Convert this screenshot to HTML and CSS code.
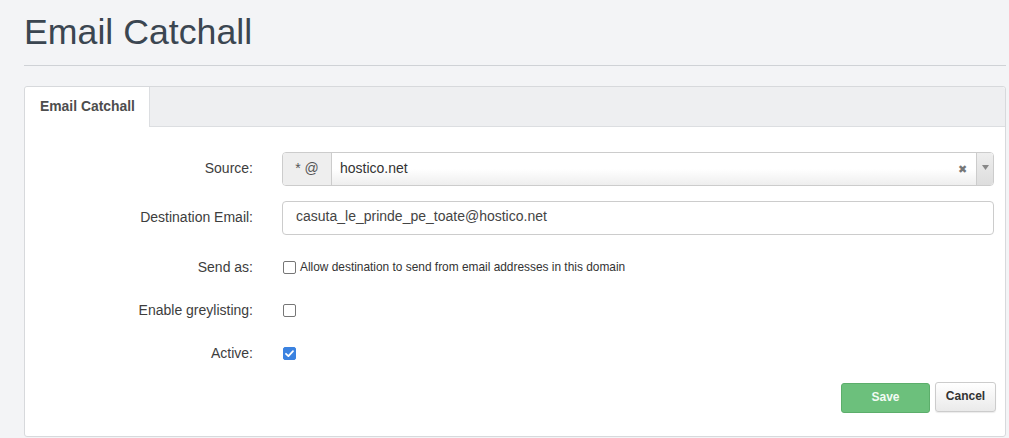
FILE: index.html
```html
<!DOCTYPE html>
<html>
<head>
<meta charset="utf-8">
<link rel="stylesheet" href="styles.css">
</head>
<body>
<div class="page">
  <h1 class="title">Email Catchall</h1>
  <div class="rule"></div>
  <div class="panel">
    <div class="tabs">
      <div class="tab active">Email Catchall</div>
    </div>
    <div class="form">
      <div class="row row-input">
        <div class="label">Source:</div>
        <div class="control">
          <div class="group">
            <span class="addon">* @</span>
            <div class="select">
              <span class="select-value">hostico.net</span>
              <span class="select-clear">&#x2716;</span>
              <span class="select-arrow"><svg width="7" height="5" viewBox="0 0 7 5"><path d="M0 0h7L3.5 5z" fill="#888"/></svg></span>
            </div>
          </div>
        </div>
      </div>
      <div class="row row-input">
        <div class="label">Destination Email:</div>
        <div class="control">
          <div class="input">casuta_le_prinde_pe_toate@hostico.net</div>
        </div>
      </div>
      <div class="row row-check first-check">
        <div class="label">Send as:</div>
        <div class="control check-line">
          <span class="box"></span>
          <span class="check-text">Allow destination to send from email addresses in this domain</span>
        </div>
      </div>
      <div class="row row-check">
        <div class="label">Enable greylisting:</div>
        <div class="control check-line">
          <span class="box"></span>
        </div>
      </div>
      <div class="row row-check">
        <div class="label">Active:</div>
        <div class="control check-line">
          <span class="box checked"><svg width="13" height="13" viewBox="0 0 13 13"><path d="M3 6.8l2.4 2.3L10 4.2" fill="none" stroke="#fff" stroke-width="1.8" stroke-linecap="round" stroke-linejoin="round"/></svg></span>
        </div>
      </div>
      <div class="actions">
        <button class="btn btn-save">Save</button>
        <button class="btn btn-cancel">Cancel</button>
      </div>
    </div>
  </div>
</div>
</body>
</html>
```
FILE: styles.css
```css
html, body {
  margin: 0;
  padding: 0;
  background: #f3f4f6;
  font-family: "Liberation Sans", Arial, sans-serif;
  color: #333;
}
.page {
  padding: 0 3px 0 24px;
}
.title {
  margin: 0;
  padding-top: 12px;
  height: 43px;
  font-size: 35.7px;
  font-weight: normal;
  line-height: 40px;
  color: #3b4651;
}
.rule {
  margin-top: 10px;
  height: 1px;
  background: #cfd2d6;
}
.panel {
  margin-top: 20px;
  background: #fff;
  border: 1px solid #d7d9dc;
  border-radius: 3px;
  box-sizing: border-box;
  height: 351px;
}
.tabs {
  display: flex;
  height: 39px;
  background: #eeeff1;
  border-bottom: 1px solid #dcdee1;
  border-radius: 3px 3px 0 0;
}
.tab {
  width: 125px;
  box-sizing: border-box;
  padding-left: 15px;
  line-height: 38px;
  font-size: 13.9px;
  font-weight: bold;
  color: #4d4d4d;
}
.tab.active {
  background: #fff;
  height: 40px;
  border-right: 1px solid #dcdee1;
  border-radius: 3px 0 0 0;
}
.form {
  padding: 25px 11px 0 0;
}
.row {
  display: flex;
  align-items: center;
}
.row-input {
  height: 34px;
  margin-bottom: 15px;
}
.row-input .label {
  padding-bottom: 3px;
}
.row-input + .row-input {
  margin-bottom: 18px;
}
.row-check {
  height: 28px;
  margin-bottom: 15px;
}
.row-check .label {
  padding-bottom: 1px;
}
.row-check:last-of-type {
  margin-bottom: 0;
}
.label {
  width: 228px;
  flex: none;
  text-align: right;
  font-size: 14px;
  color: #3d3d3d;
}
.control {
  flex: 1;
  margin-left: 29px;
}
.group {
  display: flex;
  height: 34px;
  border: 1px solid #ccc;
  border-radius: 4px;
  box-sizing: border-box;
  overflow: hidden;
}
.addon {
  width: 48px;
  flex: none;
  background: #eee;
  border-right: 1px solid #ccc;
  text-align: center;
  font-size: 14px;
  line-height: 30px;
  color: #555;
}
.select {
  flex: 1;
  display: flex;
  align-items: center;
  background: linear-gradient(#fff 0%, #fff 50%, #eee 100%);
}
.select-value {
  flex: 1;
  padding-left: 8px;
  padding-bottom: 2px;
  font-size: 14px;
  color: #333;
}
.select-clear {
  font-size: 11px;
  color: #777;
  margin-right: 9px;
}
.select-arrow {
  width: 17px;
  height: 32px;
  box-sizing: border-box;
  border-left: 1px solid #ccc;
  background: linear-gradient(#eee, #ddd);
  display: flex;
  justify-content: center;
  padding-top: 12px;
}
.select-arrow svg {
  display: block;
}
.input {
  height: 34px;
  box-sizing: border-box;
  border: 1px solid #ccc;
  border-radius: 4px;
  padding: 0 13px;
  line-height: 29px;
  font-size: 14px;
  color: #444;
}
.check-line {
  display: flex;
  align-items: center;
  margin-left: 30px;
}
.box {
  width: 13px;
  height: 13px;
  box-sizing: border-box;
  border: 1px solid #767676;
  border-radius: 2px;
  background: #fff;
  flex: none;
}
.box.checked {
  background: #3b82e0;
  border-color: #3b82e0;
  position: relative;
}
.box.checked svg {
  position: absolute;
  left: -1px;
  top: -1px;
}
.check-text {
  margin-left: 4px;
  font-size: 11.9px;
  color: #333;
}
.actions {
  display: flex;
  justify-content: flex-end;
  align-items: flex-start;
  margin-top: 11px;
  margin-right: -2px;
}
.btn {
  font-family: "Liberation Sans", Arial, sans-serif;
  font-size: 12px;
  font-weight: bold;
  border-radius: 3px;
  cursor: pointer;
}
.btn-save {
  width: 89px;
  height: 30px;
  margin-top: 1px;
  padding-bottom: 4px;
  background: #6cc07c;
  border: 1px solid #5cae6b;
  color: #f2fbf3;
}
.btn-cancel {
  width: 61px;
  height: 30px;
  margin-left: 5px;
  padding-bottom: 3px;
  background: linear-gradient(#fff, #eaeaea);
  border: 1px solid #ccc;
  color: #333;
  box-shadow: 0 1px 1px rgba(0,0,0,0.08);
}
```
